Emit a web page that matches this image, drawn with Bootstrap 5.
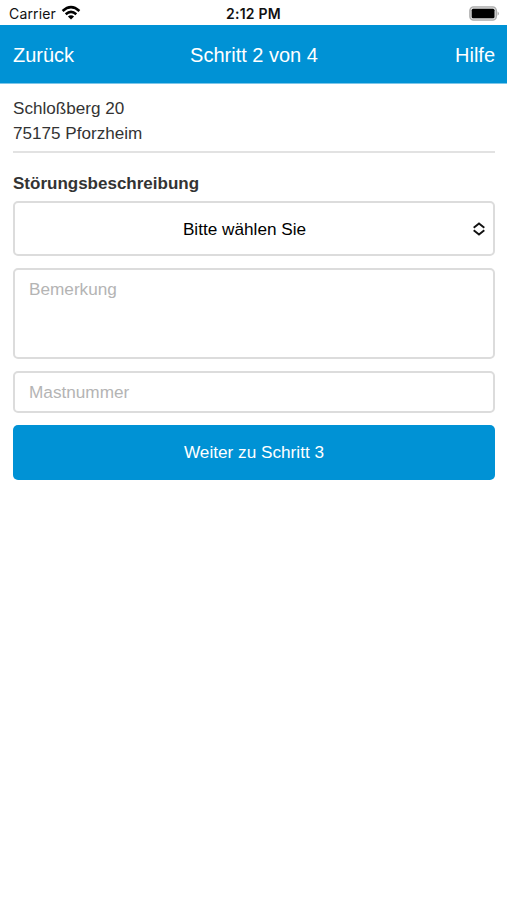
<!DOCTYPE html>
<html lang="de">
<head>
<meta charset="utf-8">
<meta name="viewport" content="width=device-width, initial-scale=1">
<title>Schritt 2 von 4</title>
<link href="https://cdn.jsdelivr.net/npm/bootstrap@5.3.0/dist/css/bootstrap.min.css" rel="stylesheet">
<style>
body{font-family:"Liberation Sans",Arial,sans-serif;font-size:17.1px;line-height:24.5px;color:#333;background:#fff}
.statusbar{height:25px;font-family:Inter,sans-serif;font-size:14px;line-height:26px;color:#111;padding:1px 7px 0 9px}
.statusbar>div{flex:1 1 0}
.carrier{letter-spacing:.15px;padding-top:1px}
.wifi{margin-left:5px}
.clock{font-size:14px;letter-spacing:.25px;padding:1px 2px 0 0}
.topbar{height:59px;background:#0092d5;border-bottom:1px solid #7cc6e9;font-size:20px;padding:3px 12px 0 13px}
.topbar>*{flex:1 1 0;color:#fff;text-decoration:none}
.page{padding:13px 12px 0 13px}
.address{height:56px;border-bottom:2px solid #e2e2e2;padding-top:.4px}
.caption-bold{font-size:17px;margin-top:18px;margin-bottom:5px;line-height:25px}
.field,.field:focus{border:2px solid #dcdcdc;border-radius:5px;font-size:17.2px;color:#000;padding:6px 14px;resize:none;box-shadow:none}
.field::placeholder{color:#b4b4b4;opacity:1}
.picker{height:55px;padding:2px 8px 0 1px;margin-bottom:12px}
.picker svg{margin-top:-1px}
.note,.note:focus{height:91px;line-height:27px;margin-bottom:12px}
.mast,.mast:focus{height:42px;margin-bottom:12px;padding-top:7px}
.go,.go:hover{height:55px;background:#0092d5;border:0;border-radius:5px;color:#fff;font-size:17.2px;padding-top:7px}
</style>
<script src="https://cdn.jsdelivr.net/npm/bootstrap@5.3.0/dist/js/bootstrap.bundle.min.js"></script>
</head>
<body>
<div class="statusbar d-flex align-items-center">
  <div class="d-flex align-items-center"><span class="carrier">Carrier</span>
    <svg class="wifi" width="20" height="16" viewBox="0 0 20 16" fill="none" stroke="#000" stroke-width="2.5"><path d="M1.6 6Q10 -1.7 18.4 6M4.7 9.3Q10 4.5 15.3 9.3"/><path d="M10 14.5 6.9 11.4Q10 8.9 13.1 11.4Z" fill="#000" stroke="none"/></svg>
  </div>
  <span class="clock fw-semibold">2:12 PM</span>
  <div class="d-flex justify-content-end">
    <svg width="31" height="15" viewBox="0 0 31 15"><rect x=".9" y=".9" width="26.4" height="13.2" rx="3.7" fill="#ddd" stroke="#aaa" stroke-width="1.4"/><rect x="2.7" y="2.7" width="22.8" height="9.6" rx="1.5" fill="#000"/><path d="M28.6 5.2Q31 7.5 28.6 9.8Z" fill="#999"/></svg>
  </div>
</div>
<nav class="topbar d-flex align-items-center">
  <a href="#">Zurück</a>
  <span class="text-center text-nowrap">Schritt 2 von 4</span>
  <a href="#" class="text-end">Hilfe</a>
</nav>
<main class="page">
  <div class="address">Schloßberg 20<br>75175 Pforzheim</div>
  <div class="caption-bold fw-bold">Störungsbeschreibung</div>
  <button type="button" class="field picker w-100 bg-white d-flex align-items-center">
    <span class="flex-grow-1 text-center">Bitte wählen Sie</span>
    <svg width="12" height="14" viewBox="0 0 12 14" fill="none" stroke="#111" stroke-width="1.9"><path d="M.7 5.7 6 1.4l5.3 4.3M.7 8.3 6 12.6l5.3-4.3"/></svg>
  </button>
  <textarea class="field note form-control" placeholder="Bemerkung"></textarea>
  <input class="field mast form-control" type="text" placeholder="Mastnummer">
  <button type="button" class="go btn w-100">Weiter zu Schritt 3</button>
</main>
</body>
</html>
